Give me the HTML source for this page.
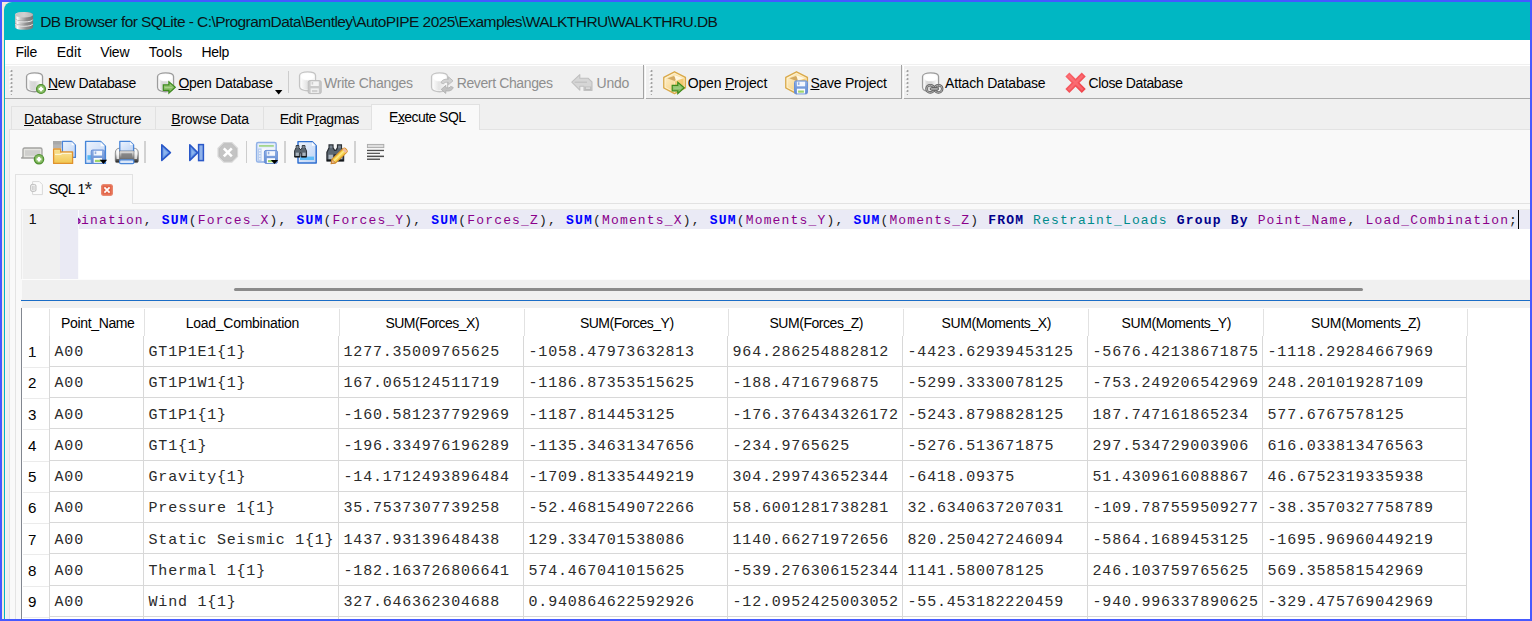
<!DOCTYPE html>
<html><head><meta charset="utf-8"><title>DB Browser for SQLite</title>
<style>
*{margin:0;padding:0;box-sizing:border-box}
html,body{width:1532px;height:621px;overflow:hidden;background:#4659ff}
body{position:relative;font-family:"Liberation Sans",sans-serif;font-size:14px;color:#000}
.a{position:absolute}
.t{position:absolute;white-space:pre;line-height:16px;letter-spacing:-0.36px}
.dis{color:#8e8e8e}
u{text-decoration:underline;text-underline-offset:1px;text-decoration-thickness:1px}
#desk{left:2px;top:2px;width:1528px;height:617px;background:#f6e8dc}
#win{left:4px;top:2px;width:1526px;height:617px;background:#f0f0f0;border-top-left-radius:8px;overflow:hidden}
#win>*{position:absolute}
#title{left:0;top:0;width:1526px;height:38px;background:#00b7c3}
#wborder{left:0;top:30px;width:1px;height:587px;background:#00b7c3}
#menu{left:1px;top:38px;width:1525px;height:24px;background:#fff}
.mono{font-family:"Liberation Mono",monospace}
.hl{background:#a0a0a0}
.wl{background:#fff}
#pane{left:5px;top:127px;width:1530px;height:500px;background:#f9f9f9;border:1px solid #e3e3e3}
.tab{background:#f0f0f0;border:1px solid #e1e1e1;border-bottom:none}
.tabsel{background:#f9f9f9;border:1px solid #e1e1e1;border-bottom:none}
.vsep{width:1px;background:#cfcfcf}
#ed{left:18px;top:208px;width:1510px;height:69px;background:#fff;overflow:hidden}
#ed>*{position:absolute}
.code{font-family:"Liberation Mono",monospace;font-size:13px;letter-spacing:1.179px;line-height:19px;white-space:pre;color:#1c1c1c}
.kw{color:#00008b;font-weight:bold}.fn{color:#0000ff;font-weight:bold}.id{color:#8b008b}.tb{color:#008b8b}
#grid{left:18px;top:306px;width:1510px;height:320px;background:#fff;overflow:hidden}
#grid>*{position:absolute}
.cell{position:absolute;font-family:"Liberation Mono",monospace;font-size:15px;letter-spacing:0.775px;line-height:20px;white-space:pre;color:#2b2b2b}
.hd{position:absolute;white-space:pre;line-height:16px;letter-spacing:-0.36px;text-align:center}
.rn{position:absolute;white-space:pre;line-height:16px;transform:scaleX(1.08);transform-origin:0 0}
</style></head>
<body>

<svg width="0" height="0" style="position:absolute">
<defs>
 <linearGradient id="cylG" x1="0" x2="1" y1="0" y2="0"><stop offset="0" stop-color="#f4f4f4"/><stop offset=".2" stop-color="#dadada"/><stop offset=".55" stop-color="#d6d6d6"/><stop offset=".85" stop-color="#eeeeee"/><stop offset="1" stop-color="#f8f8f8"/></linearGradient>
 <linearGradient id="cylD" x1="0" x2="1" y1="0" y2="0"><stop offset="0" stop-color="#fafafa"/><stop offset=".45" stop-color="#e4e4e4"/><stop offset="1" stop-color="#f6f6f6"/></linearGradient>
 <linearGradient id="grA" x1="0" x2="0" y1="0" y2="1"><stop offset="0" stop-color="#9ccb7c"/><stop offset="1" stop-color="#7db55a"/></linearGradient>
 <linearGradient id="boxG" x1="0" x2="1" y1="0" y2="1"><stop offset="0" stop-color="#fff3d6"/><stop offset="1" stop-color="#f3c766"/></linearGradient>
 <linearGradient id="flpG" x1="0" x2="0" y1="0" y2="1"><stop offset="0" stop-color="#8fb0e6"/><stop offset="1" stop-color="#5f88d0"/></linearGradient>
 <linearGradient id="pgG" x1="0" x2="1" y1="0" y2="1"><stop offset="0" stop-color="#eef4fd"/><stop offset="1" stop-color="#bcd3f5"/></linearGradient>
 <linearGradient id="redG" x1="0" x2="1" y1="0" y2="1"><stop offset="0" stop-color="#fb6a70"/><stop offset="1" stop-color="#ee3f46"/></linearGradient>
 <linearGradient id="folG" x1="0" x2="0" y1="0" y2="1"><stop offset="0" stop-color="#fbe9a6"/><stop offset="1" stop-color="#f1c64f"/></linearGradient>
 <linearGradient id="prG" x1="0" x2="0" y1="0" y2="1"><stop offset="0" stop-color="#f4f4f4"/><stop offset=".5" stop-color="#9a9a9a"/><stop offset="1" stop-color="#e8e8e8"/></linearGradient>
 <linearGradient id="plG" x1="0" x2="1" y1="0" y2="0"><stop offset="0" stop-color="#3d6fd6"/><stop offset="1" stop-color="#8eb0ee"/></linearGradient>
</defs></svg>
<div id="desk" class="a"></div>
<div id="win" class="a">
<div id="title"><span class="t " style="left:36.2px;top:10.6px;font-size:15.5px;letter-spacing:-0.570px;line-height:18px;color:#0b1416;">DB Browser for SQLite - C:\ProgramData\Bentley\AutoPIPE 2025\Examples\WALKTHRU\WALKTHRU.DB</span><svg class="a" style="left:10px;top:9px" width="20" height="20" viewBox="0 0 20 20">
<defs><linearGradient id="dbt" x1="0" x2="1"><stop offset="0" stop-color="#b4b4b4"/><stop offset=".13" stop-color="#fbfbfb"/><stop offset=".3" stop-color="#cacaca"/><stop offset=".62" stop-color="#909090"/><stop offset="1" stop-color="#767676"/></linearGradient>
<linearGradient id="dbt2" x1="0" x2="1"><stop offset="0" stop-color="#c4c4c4"/><stop offset=".5" stop-color="#d0d0d0"/><stop offset="1" stop-color="#b4b4b4"/></linearGradient></defs>
<path d="M1 3.8 C1 .2 19.1 .2 19.1 3.8 L19.1 16 C19.1 19.8 1 19.8 1 16 Z" fill="url(#dbt)"/>
<ellipse cx="10.05" cy="3.8" rx="9.05" ry="2.8" fill="url(#dbt2)"/>
<path d="M1 7.6 C1 10.8 19.1 10.8 19.1 7.6" fill="none" stroke="#8a8a8a" stroke-width=".9" opacity=".55"/>
<path d="M1.5 8.7 C1.5 11.7 18.6 11.7 18.6 8.7" fill="none" stroke="#e8e8e8" stroke-width="1"/>
<path d="M1 11.9 C1 15.1 19.1 15.1 19.1 11.9" fill="none" stroke="#8a8a8a" stroke-width=".9" opacity=".55"/>
<path d="M1.5 13 C1.5 16 18.6 16 18.6 13" fill="none" stroke="#e8e8e8" stroke-width="1"/>
</svg></div>
<div id="wborder"></div>
<div id="menu"><span class="t " style="left:10.6px;top:4px;letter-spacing:-0.320px;">File</span><span class="t " style="left:51.7px;top:4px;letter-spacing:0.092px;">Edit</span><span class="t " style="left:95.2px;top:4px;letter-spacing:-0.264px;">View</span><span class="t " style="left:143.7px;top:4px;letter-spacing:0.229px;">Tools</span><span class="t " style="left:196.6px;top:4px;letter-spacing:-0.364px;">Help</span></div>
<div style="left:1px;top:62px;width:1px;height:560px;background:#fbf2f1"></div><div class="wl" style="left:1px;top:63px;width:1525px;height:1px"></div><div class="hl" style="left:1px;top:96px;width:1525px;height:1px;background:#a9a9a9"></div><div style="left:639px;top:63px;width:1px;height:34px;background:#a3a3a3"></div><div class="wl" style="left:641px;top:63px;width:1px;height:33px"></div><div style="left:640px;top:96px;width:2px;height:1px;background:#f0f0f0"></div><div style="left:897px;top:63px;width:1px;height:34px;background:#a3a3a3"></div><div class="wl" style="left:899px;top:63px;width:1px;height:33px"></div><div style="left:898px;top:96px;width:2px;height:1px;background:#f0f0f0"></div><svg class="a" style="left:5px;top:67.4px" width="4" height="28" viewBox="0 0 4 28" ><rect x="1.5" y="1.0" width="1.9" height="2" fill="#a2a2a2"/><rect x=".3" y="0.1" width="1.5" height="1.5" fill="#ffffff"/><rect x="1.5" y="5.0" width="1.9" height="2" fill="#a2a2a2"/><rect x=".3" y="4.1" width="1.5" height="1.5" fill="#ffffff"/><rect x="1.5" y="9.0" width="1.9" height="2" fill="#a2a2a2"/><rect x=".3" y="8.1" width="1.5" height="1.5" fill="#ffffff"/><rect x="1.5" y="13.0" width="1.9" height="2" fill="#a2a2a2"/><rect x=".3" y="12.1" width="1.5" height="1.5" fill="#ffffff"/><rect x="1.5" y="17.0" width="1.9" height="2" fill="#a2a2a2"/><rect x=".3" y="16.1" width="1.5" height="1.5" fill="#ffffff"/><rect x="1.5" y="21.0" width="1.9" height="2" fill="#a2a2a2"/><rect x=".3" y="20.1" width="1.5" height="1.5" fill="#ffffff"/><rect x="1.8" y="25" width="1.2" height="1" fill="#a8a8a8"/></svg><svg class="a" style="left:644.7px;top:67.4px" width="4" height="28" viewBox="0 0 4 28" ><rect x="1.5" y="1.0" width="1.9" height="2" fill="#a2a2a2"/><rect x=".3" y="0.1" width="1.5" height="1.5" fill="#ffffff"/><rect x="1.5" y="5.0" width="1.9" height="2" fill="#a2a2a2"/><rect x=".3" y="4.1" width="1.5" height="1.5" fill="#ffffff"/><rect x="1.5" y="9.0" width="1.9" height="2" fill="#a2a2a2"/><rect x=".3" y="8.1" width="1.5" height="1.5" fill="#ffffff"/><rect x="1.5" y="13.0" width="1.9" height="2" fill="#a2a2a2"/><rect x=".3" y="12.1" width="1.5" height="1.5" fill="#ffffff"/><rect x="1.5" y="17.0" width="1.9" height="2" fill="#a2a2a2"/><rect x=".3" y="16.1" width="1.5" height="1.5" fill="#ffffff"/><rect x="1.5" y="21.0" width="1.9" height="2" fill="#a2a2a2"/><rect x=".3" y="20.1" width="1.5" height="1.5" fill="#ffffff"/><rect x="1.8" y="25" width="1.2" height="1" fill="#a8a8a8"/></svg><svg class="a" style="left:901.2px;top:67.4px" width="4" height="28" viewBox="0 0 4 28" ><rect x="1.5" y="1.0" width="1.9" height="2" fill="#a2a2a2"/><rect x=".3" y="0.1" width="1.5" height="1.5" fill="#ffffff"/><rect x="1.5" y="5.0" width="1.9" height="2" fill="#a2a2a2"/><rect x=".3" y="4.1" width="1.5" height="1.5" fill="#ffffff"/><rect x="1.5" y="9.0" width="1.9" height="2" fill="#a2a2a2"/><rect x=".3" y="8.1" width="1.5" height="1.5" fill="#ffffff"/><rect x="1.5" y="13.0" width="1.9" height="2" fill="#a2a2a2"/><rect x=".3" y="12.1" width="1.5" height="1.5" fill="#ffffff"/><rect x="1.5" y="17.0" width="1.9" height="2" fill="#a2a2a2"/><rect x=".3" y="16.1" width="1.5" height="1.5" fill="#ffffff"/><rect x="1.5" y="21.0" width="1.9" height="2" fill="#a2a2a2"/><rect x=".3" y="20.1" width="1.5" height="1.5" fill="#ffffff"/><rect x="1.8" y="25" width="1.2" height="1" fill="#a8a8a8"/></svg><svg class="a" style="left:21px;top:70px" width="24" height="24" viewBox="0 0 24 24" ><path d="M1.55 4.6 C1.55 -0.4 17.55 -0.4 17.55 4.6 L17.55 15.6 C17.55 21.1 1.55 21.1 1.55 15.6 Z" fill="#fafafa" stroke="#9c9c9c" stroke-width="1.3"/><path d="M3.3 6.4 C3.3 10.2 15.8 10.2 15.8 6.4 L15.8 15.4 C15.8 19.4 3.3 19.4 3.3 15.4 Z" fill="url(#cylG)"/><ellipse cx="9.55" cy="5.5" rx="6.5" ry="3.2" fill="#ffffff"/><circle cx="16" cy="17" r="4.5" fill="#7fb55c" stroke="#4f9130" stroke-width="1.2"/><circle cx="16" cy="17" r="2.9" fill="#96c776"/><path d="M16 14.7 V19.3 M13.7 17 H18.3" stroke="#fff" stroke-width="2.1"/></svg><svg class="a" style="left:152px;top:70px" width="24" height="24" viewBox="0 0 24 24" ><path d="M1.55 4.6 C1.55 -0.4 17.55 -0.4 17.55 4.6 L17.55 15.6 C17.55 21.1 1.55 21.1 1.55 15.6 Z" fill="#fafafa" stroke="#9c9c9c" stroke-width="1.3"/><path d="M3.3 6.4 C3.3 10.2 15.8 10.2 15.8 6.4 L15.8 15.4 C15.8 19.4 3.3 19.4 3.3 15.4 Z" fill="url(#cylG)"/><ellipse cx="9.55" cy="5.5" rx="6.5" ry="3.2" fill="#ffffff"/><g transform="translate(6.7,8.9)"><path d="M0.6 4 L6.2 4 L6.2 0.8 L12.6 6.4 L6.2 12.2 L6.2 9.4 L0.6 9.4 Z" fill="url(#grA)" stroke="#3c8a1c" stroke-width="1.2" stroke-linejoin="miter"/><path d="M2 6.7 L9.5 6.7" stroke="#b9dba0" stroke-width="1" opacity=".7"/></g></svg><svg class="a" style="left:294.1px;top:69px" width="26" height="26" viewBox="0 0 26 26" ><path d="M1.55 4.6 C1.55 -0.4 17.55 -0.4 17.55 4.6 L17.55 15.6 C17.55 21.1 1.55 21.1 1.55 15.6 Z" fill="#fafafa" stroke="#c4c4c4" stroke-width="1.3"/><path d="M3.3 6.4 C3.3 10.2 15.8 10.2 15.8 6.4 L15.8 15.4 C15.8 19.4 3.3 19.4 3.3 15.4 Z" fill="url(#cylD)"/><ellipse cx="9.55" cy="5.5" rx="6.5" ry="3.2" fill="#ffffff"/><g transform="translate(9.6,9) scale(1.0)"><rect x=".6" y=".6" width="13" height="13" rx="1.6" fill="#c9c9c9" stroke="#bdbdbd" stroke-width="1"/><rect x="3" y="1.4" width="8.2" height="4.6" fill="#f3f3f3"/><rect x="3" y="8.4" width="8.2" height="4.6" fill="#f0f0f0"/><rect x="4.4" y="10" width="5.4" height="2.2" fill="#d0d0d0"/><rect x="4" y="2" width="1.6" height="2.6" fill="#cfcfcf"/></g></svg><svg class="a" style="left:426.1px;top:70px" width="26" height="24" viewBox="0 0 26 24" ><path d="M1.55 4.6 C1.55 -0.4 17.55 -0.4 17.55 4.6 L17.55 15.6 C17.55 21.1 1.55 21.1 1.55 15.6 Z" fill="#fafafa" stroke="#c4c4c4" stroke-width="1.3"/><path d="M3.3 6.4 C3.3 10.2 15.8 10.2 15.8 6.4 L15.8 15.4 C15.8 19.4 3.3 19.4 3.3 15.4 Z" fill="url(#cylD)"/><ellipse cx="9.55" cy="5.5" rx="6.5" ry="3.2" fill="#ffffff"/><path d="M9.6 9.6 C10.4 6.4 14 5.6 17 6.2 L17 3.6 L21.6 7.6 L17 11.6 L17 9.2 C14.6 8.8 12.6 9.2 12.2 10.6 Z" fill="#d2d2d2" stroke="#b8b8b8" stroke-width=".9" transform="translate(1.4,1.2)"/><path d="M22.6 14 C21.8 17.2 18.2 18 15.2 17.4 L15.2 20 L10.6 16 L15.2 12 L15.2 14.4 C17.6 14.8 19.6 14.4 20 13 Z" fill="#c2c2c2" stroke="#b0b0b0" stroke-width=".9" transform="translate(0.6,1.4)"/></svg><svg class="a" style="left:566px;top:71px" width="24" height="20" viewBox="0 0 24 20" ><path d="M1.8 9.2 L9.8 1.6 L9.8 5.2 L18 5.2 L22 9 L22 17.4 L14 17.4 L14 13.2 L9.8 13.2 L9.8 17.2 Z" fill="#d6d6d6" stroke="#c0c0c0" stroke-width="1.1" stroke-linejoin="round"/><path d="M4.6 9.2 L17 9.2" stroke="#c4c4c4" stroke-width="1.4"/><rect x="14.6" y="13.6" width="6.8" height="3.4" fill="#bababa"/><rect x="15.8" y="14.4" width="4.4" height="1.4" fill="#e2e2e2"/></svg><svg class="a" style="left:659px;top:68.6px" width="26" height="26" viewBox="0 0 26 26" ><path d="M11.5 0.8 L22.4 6.4 L22.4 17 L11.5 22.6 L0.8 17 L0.8 6.4 Z" fill="url(#boxG)" stroke="#d9a94a" stroke-width="1.4" stroke-linejoin="round"/><path d="M11.5 10.6 L21.4 7 L21.4 16.5 L11.5 21.5 Z" fill="#f0bc55" opacity=".5"/><path d="M3 7.2 L11.5 4 L20.4 7.2 L11.5 10.6 Z" fill="#f9e3ae"/><path d="M4.4 7.2 L11 5 L13.2 8.4 L11.5 10 Z" fill="#c99b50" opacity=".8"/><path d="M11.5 4.2 L12.8 9.6 L20 7.2 Z" fill="#fff8e6" opacity=".95"/><path d="M11.5 2.3 L21.1 7.2 L21.1 16.2 L11.5 21.1 L2.1 16.2 L2.1 7.2 Z" fill="none" stroke="#fff6dc" stroke-width=".8" opacity=".8"/><path d="M11.5 10.6 L11.5 21.4" stroke="#fbe9bd" stroke-width="1"/><g transform="translate(8.6,10.4)"><path d="M0.6 4 L6.2 4 L6.2 0.8 L12.6 6.4 L6.2 12.2 L6.2 9.4 L0.6 9.4 Z" fill="url(#grA)" stroke="#3c8a1c" stroke-width="1.2" stroke-linejoin="miter"/><path d="M2 6.7 L9.5 6.7" stroke="#b9dba0" stroke-width="1" opacity=".7"/></g></svg><svg class="a" style="left:781px;top:68.6px" width="26" height="26" viewBox="0 0 26 26" ><path d="M11.5 0.8 L22.4 6.4 L22.4 17 L11.5 22.6 L0.8 17 L0.8 6.4 Z" fill="url(#boxG)" stroke="#d9a94a" stroke-width="1.4" stroke-linejoin="round"/><path d="M11.5 10.6 L21.4 7 L21.4 16.5 L11.5 21.5 Z" fill="#f0bc55" opacity=".5"/><path d="M3 7.2 L11.5 4 L20.4 7.2 L11.5 10.6 Z" fill="#f9e3ae"/><path d="M4.4 7.2 L11 5 L13.2 8.4 L11.5 10 Z" fill="#c99b50" opacity=".8"/><path d="M11.5 4.2 L12.8 9.6 L20 7.2 Z" fill="#fff8e6" opacity=".95"/><path d="M11.5 2.3 L21.1 7.2 L21.1 16.2 L11.5 21.1 L2.1 16.2 L2.1 7.2 Z" fill="none" stroke="#fff6dc" stroke-width=".8" opacity=".8"/><path d="M11.5 10.6 L11.5 21.4" stroke="#fbe9bd" stroke-width="1"/><g transform="translate(8.9,9.3) scale(1.0)"><rect x=".6" y=".6" width="13" height="13" rx="1.6" fill="url(#flpG)" stroke="#6a90d6" stroke-width="1"/><rect x="3" y="1.4" width="8.2" height="4.6" fill="#f4f7fd"/><rect x="3" y="8.4" width="8.2" height="4.8" fill="#fbfcfe"/><rect x="4.2" y="10.2" width="5.8" height="2.2" fill="#9fd468"/><rect x="4" y="2" width="1.6" height="2.6" fill="#93aee0"/></g></svg><svg class="a" style="left:916.5px;top:70px" width="26" height="24" viewBox="0 0 26 24" ><path d="M1.55 4.6 C1.55 -0.4 17.55 -0.4 17.55 4.6 L17.55 15.6 C17.55 21.1 1.55 21.1 1.55 15.6 Z" fill="#fafafa" stroke="#9c9c9c" stroke-width="1.3"/><path d="M3.3 6.4 C3.3 10.2 15.8 10.2 15.8 6.4 L15.8 15.4 C15.8 19.4 3.3 19.4 3.3 15.4 Z" fill="url(#cylG)"/><ellipse cx="9.55" cy="5.5" rx="6.5" ry="3.2" fill="#ffffff"/><g fill="none" stroke="#626262" stroke-width="2.5"><rect x="5.5" y="13.2" width="7.6" height="7.3" rx="3.6"/><rect x="13.6" y="13.2" width="7.6" height="7.3" rx="3.6"/></g><g fill="none" stroke="#b8b8b8" stroke-width=".9"><rect x="5.5" y="13.2" width="7.6" height="7.3" rx="3.6"/><rect x="13.6" y="13.2" width="7.6" height="7.3" rx="3.6"/></g><rect x="9.4" y="15.5" width="8" height="2.8" rx="1.2" fill="#a6a6a6" stroke="#5e5e5e" stroke-width=".9"/></svg><svg class="a" style="left:1060px;top:69px" width="24" height="24" viewBox="0 0 24 24" ><g transform="translate(-.05,.1)"><path d="M5.4 1.4 L11.6 7.6 L17.8 1.4 L21.8 5.4 L15.6 11.6 L21.8 17.8 L17.8 21.8 L11.6 15.6 L5.4 21.8 L1.4 17.8 L7.6 11.6 L1.4 5.4 Z" fill="url(#redG)"/><path d="M5.4 3.6 L11.6 9.8 L17.8 3.6 L19.6 5.4 L13.4 11.6 L19.6 17.8 L17.8 19.6 L11.6 13.4 L5.4 19.6 L3.6 17.8 L9.8 11.6 L3.6 5.4 Z" fill="#ff8287" opacity=".5"/></g></svg><span class="t " style="left:43.9px;top:73px;letter-spacing:-0.312px;"><u>N</u>ew Database</span><span class="t " style="left:174.5px;top:73px;letter-spacing:-0.297px;"><u>O</u>pen Database</span><span class="t dis" style="left:320.1px;top:73px;letter-spacing:-0.278px;">Write Changes</span><span class="t dis" style="left:452.7px;top:73px;letter-spacing:-0.374px;">Revert Changes</span><span class="t dis" style="left:592.6px;top:73px;letter-spacing:-0.290px;">Undo</span><span class="t " style="left:683.8px;top:73px;letter-spacing:-0.201px;">Open <u>P</u>roject</span><span class="t " style="left:806.4px;top:73px;letter-spacing:-0.261px;"><u>S</u>ave Project</span><span class="t " style="left:941.1px;top:73px;letter-spacing:-0.215px;">Attach Database</span><span class="t " style="left:1084.6px;top:73px;letter-spacing:-0.401px;">Close Database</span><svg class="a" style="left:271px;top:88px" width="8" height="5" viewBox="0 0 8 5" ><path d="M0 0 L7.4 0 L3.7 4.4 Z" fill="#000"/></svg><div class="vsep" style="left:284px;top:69px;height:22px;background:#cdcdcd"></div><div id="pane"></div><div class="tab" style="left:7px;top:104px;width:145px;height:23px"></div><div class="tab" style="left:151px;top:104px;width:109px;height:23px"></div><div class="tab" style="left:259px;top:104px;width:109px;height:23px"></div><div class="tabsel" style="left:367px;top:102px;width:109px;height:26px"></div><span class="t " style="left:20.1px;top:109px;letter-spacing:-0.184px;"><u>D</u>atabase Structure</span><span class="t " style="left:167.3px;top:109px;letter-spacing:-0.244px;"><u>B</u>rowse Data</span><span class="t " style="left:275.7px;top:109px;letter-spacing:-0.403px;">Edit P<u>r</u>agmas</span><span class="t " style="left:385.1px;top:107px;letter-spacing:-0.559px;">E<u>x</u>ecute SQL</span><svg class="a" style="left:16px;top:142.6px" width="26" height="22" viewBox="0 0 26 22" ><path d="M1.6 13 L3 11.8 L3 4.6 Q3 3 4.6 3 L20.4 3 Q22 3 22 4.6 L22 11.8 L23 13 Z" fill="#e4e4e0" stroke="#a2a2a0" stroke-width="1.3" stroke-linejoin="round"/><rect x="5" y="5.2" width="15" height="5.6" fill="#cfcfcd"/><circle cx="19" cy="14.2" r="4.7" fill="#7fb55c" stroke="#4f9130" stroke-width="1.2"/><circle cx="19" cy="14.2" r="3.0" fill="#96c776"/><path d="M19 11.899999999999999 V16.5 M16.7 14.2 H21.3" stroke="#fff" stroke-width="2.1"/></svg><svg class="a" style="left:48px;top:138px" width="26" height="26" viewBox="0 0 26 26" ><rect x="1" y="1" width="8.4" height="7.4" fill="#b4b4b4"/><rect x="1" y="1" width="8.4" height="3.4" fill="#a8a8a8"/><g transform="translate(9.6,0.6)"><path d="M.8 .8 L10.0 .8 L13.799999999999999 4.6 L13.799999999999999 16.8 L.8 16.8 Z" fill="url(#pgG)" stroke="#4a84d8" stroke-width="1.3" stroke-linejoin="round"/><path d="M10.0 1 L10.0 4.6 L13.6 4.6 Z" fill="#fff" opacity=".9"/></g><path d="M1.6 9 L8.6 9 L8.6 12 L20.6 12 L20.6 23.4 L1.6 23.4 Z" fill="url(#folG)" stroke="#e0922e" stroke-width="1.3" stroke-linejoin="round"/><path d="M3 14.4 L8.8 14.4 L9.8 13.4 L19.4 13.4" fill="none" stroke="#fdf4cf" stroke-width="1.2"/><rect x="3" y="10.4" width="5" height="3" fill="#f6dc86"/></svg><svg class="a" style="left:80px;top:138px" width="26" height="26" viewBox="0 0 26 26" ><g transform="translate(0.8,0.6)"><path d="M.8 .8 L15.799999999999999 .8 L20.599999999999998 5.6 L20.599999999999998 22.8 L.8 22.8 Z" fill="url(#pgG)" stroke="#4686d8" stroke-width="1.4" stroke-linejoin="round"/><path d="M15.799999999999999 1 L15.799999999999999 5.6 L20.4 5.6 Z" fill="#fff" opacity=".9"/></g><rect x="3.4" y="15.2" width="4" height="4.6" fill="#57b8f6"/><g transform="translate(6.6,9.4) scale(1.02)"><rect x=".6" y=".6" width="13" height="13" rx="1.6" fill="url(#flpG)" stroke="#6a90d6" stroke-width="1"/><rect x="3" y="1.4" width="8.2" height="4.6" fill="#f4f7fd"/><rect x="3" y="8.4" width="8.2" height="4.8" fill="#fbfcfe"/><rect x="4.2" y="10.2" width="5.8" height="2.2" fill="#9fd468"/><rect x="4" y="2" width="1.6" height="2.6" fill="#93aee0"/></g><path d="M15.6 19.8 L23.2 19.8 L19.4 24 Z" fill="#000"/></svg><svg class="a" style="left:110px;top:138px" width="26" height="26" viewBox="0 0 26 26" ><defs><linearGradient id="prW" x1="0" x2="0" y1="0" y2="1"><stop offset="0" stop-color="#ffffff"/><stop offset=".4" stop-color="#d9d9d9"/><stop offset=".75" stop-color="#6a6a6a"/><stop offset="1" stop-color="#1e1e1e"/></linearGradient><linearGradient id="prM" x1="0" x2="0" y1="0" y2="1"><stop offset="0" stop-color="#ececec"/><stop offset=".35" stop-color="#b9b9b9"/><stop offset="1" stop-color="#5a5a5a"/></linearGradient></defs><path d="M1.3 13 Q1.3 8.2 6 8.2 L19.6 8.2 Q24.3 8.2 24.3 13 L24.3 21 Q24.3 22.6 22.7 22.6 L2.9 22.6 Q1.3 22.6 1.3 21 Z" fill="url(#prW)" stroke="#6b6b6b" stroke-width=".7"/><path d="M2.6 13 Q2.6 9.6 5.4 9.4 L5.4 19 L2.6 19 Z" fill="#ffffff" opacity=".75"/><path d="M20.2 9.4 Q23 9.6 23 13 L23 19 L20.2 19 Z" fill="#ffffff" opacity=".7"/><g transform="translate(5,0.6)"><path d="M.8 .8 L11.0 .8 L14.6 4.4 L14.6 10.799999999999999 L.8 10.799999999999999 Z" fill="url(#pgG)" stroke="#4a86d8" stroke-width="1.3" stroke-linejoin="round"/><path d="M11.0 1 L11.0 4.4 L14.4 4.4 Z" fill="#fff" opacity=".9"/></g><rect x="5.4" y="11" width="14.6" height="9" fill="url(#prM)" stroke="#7a7a7a" stroke-width=".6"/><rect x="7.4" y="13.4" width="10.6" height="4.8" fill="#7e7e7e" opacity=".85"/><rect x="5.6" y="19.8" width="14.2" height="3.8" rx="1.2" fill="#dbe7f8" stroke="#4a86d8" stroke-width="1.2"/></svg><svg class="a" style="left:156px;top:140px" width="14" height="22" viewBox="0 0 14 22" ><path d="M1.8 2.8 L10.4 10.6 L1.8 18.4 Z" fill="#6e9de6" stroke="#2a58c8" stroke-width="1.6" stroke-linejoin="round"/><path d="M3.6 7 L7.6 10.6 L3.6 14.2 Z" fill="#8db4ee"/></svg><svg class="a" style="left:184px;top:140px" width="18" height="22" viewBox="0 0 18 22" ><path d="M1.8 2.8 L9.6 10.6 L1.8 18.4 Z" fill="#6e9de6" stroke="#2a58c8" stroke-width="1.6" stroke-linejoin="round"/><path d="M3.6 7.4 L6.8 10.6 L3.6 13.8 Z" fill="#8db4ee"/><rect x="10.6" y="2.6" width="4.8" height="16" fill="#8fb2ea" stroke="#2a58c8" stroke-width="1.5"/></svg><svg class="a" style="left:212px;top:139px" width="24" height="24" viewBox="0 0 24 24" ><path d="M7.8 1.8 L15.8 1.8 L21.4 7.4 L21.4 15.4 L15.8 21 L7.8 21 L2.2 15.4 L2.2 7.4 Z" fill="#c4c4c4" stroke="#d8d8d8" stroke-width="1.5"/><path d="M8 2.8 L15.6 2.8 L20.4 7.6 L20.4 15.2 L15.6 20 L8 20 L3.2 15.2 L3.2 7.6 Z" fill="none" stroke="#bcbcbc" stroke-width=".8"/><path d="M7.8 7.4 L15.8 15.4 M15.8 7.4 L7.8 15.4" stroke="#fff" stroke-width="2.6"/></svg><svg class="a" style="left:251px;top:139px" width="26" height="26" viewBox="0 0 26 26" ><rect x="1.6" y="1.6" width="19.6" height="19.4" rx="1.6" fill="#e6eefb" stroke="#8fb0e6" stroke-width="1.5"/><rect x="4" y="4" width="14.8" height="1.8" fill="#a5d68c"/><rect x="3" y="7.4" width="16.8" height="12.6" fill="#f7f9fd"/><rect x="3" y="7.4" width="3.6" height="12.6" fill="#b9cef0"/><rect x="4.2" y="8.8" width="1.3" height="1.3" fill="#fff"/><rect x="4.2" y="11.6" width="1.3" height="1.3" fill="#fff"/><rect x="4.2" y="14.4" width="1.3" height="1.3" fill="#fff"/><rect x="4.2" y="17.2" width="1.3" height="1.3" fill="#fff"/><g transform="translate(8.8,8.8) scale(1.0)"><rect x=".6" y=".6" width="13" height="13" rx="1.6" fill="url(#flpG)" stroke="#6a90d6" stroke-width="1"/><rect x="3" y="1.4" width="8.2" height="4.6" fill="#f4f7fd"/><rect x="3" y="8.4" width="8.2" height="4.8" fill="#fbfcfe"/><rect x="4.2" y="10.2" width="5.8" height="2.2" fill="#9fd468"/><rect x="4" y="2" width="1.6" height="2.6" fill="#93aee0"/></g><path d="M15.8 19 L23.2 19 L19.5 23 Z" fill="#000"/></svg><svg class="a" style="left:289px;top:138px" width="26" height="26" viewBox="0 0 26 26" ><g transform="translate(4.2,0.8)"><path d="M.8 .8 L14.8 .8 L19.0 5 L19.0 22.2 L.8 22.2 Z" fill="url(#pgG)" stroke="#2f6fd0" stroke-width="1.45" stroke-linejoin="round"/><path d="M14.8 1 L14.8 5 L18.8 5 Z" fill="#fff" opacity=".9"/></g><rect x="7" y="16.6" width="14" height="3.4" fill="#5ebcf8"/><g transform="translate(0.6,4.6) scale(0.98)"><path d="M1 6.4 L2.6 3 L2.6 1 L5.4 1 L5.4 3 L6.6 5 L7.6 5 L8.8 3 L8.8 1 L11.6 1 L11.6 3 L13.2 6.4 L13.2 12.6 L7.8 12.6 L7.8 8.4 L6.4 8.4 L6.4 12.6 L1 12.6 Z" fill="#5b6670" stroke="#2b3036" stroke-width="1"/><rect x="2.2" y="8.2" width="3.2" height="3.6" fill="#aab4be"/><rect x="9" y="8.2" width="3.2" height="3.6" fill="#aab4be"/><rect x="1" y="11.6" width="5.4" height="1.4" fill="#15181b"/><rect x="7.8" y="11.6" width="5.4" height="1.4" fill="#15181b"/><rect x="3" y="1.4" width="2" height="2" fill="#7b8691"/><rect x="9.2" y="1.4" width="2" height="2" fill="#7b8691"/></g></svg><svg class="a" style="left:321px;top:140px" width="24" height="24" viewBox="0 0 24 24" ><g transform="translate(0.6,1.6) scale(1.36)"><path d="M1 6.4 L2.6 3 L2.6 1 L5.4 1 L5.4 3 L6.6 5 L7.6 5 L8.8 3 L8.8 1 L11.6 1 L11.6 3 L13.2 6.4 L13.2 12.6 L7.8 12.6 L7.8 8.4 L6.4 8.4 L6.4 12.6 L1 12.6 Z" fill="#5b6670" stroke="#2b3036" stroke-width="1"/><rect x="2.2" y="8.2" width="3.2" height="3.6" fill="#aab4be"/><rect x="9" y="8.2" width="3.2" height="3.6" fill="#aab4be"/><rect x="1" y="11.6" width="5.4" height="1.4" fill="#15181b"/><rect x="7.8" y="11.6" width="5.4" height="1.4" fill="#15181b"/><rect x="3" y="1.4" width="2" height="2" fill="#7b8691"/><rect x="9.2" y="1.4" width="2" height="2" fill="#7b8691"/></g><g transform="translate(6.2,21.6) rotate(-44)"><path d="M0 0 L3.6 -2.6 L19 -2.6 Q20.8 -2.6 20.8 -.8 L20.8 .8 Q20.8 2.6 19 2.6 L3.6 2.6 Z" fill="#f6d24c" stroke="#d9902a" stroke-width="1"/><path d="M0 0 L3.6 -2.6 L3.6 2.6 Z" fill="#e8b88a" stroke="#c27a2a" stroke-width=".8"/><rect x="4" y="-.9" width="14" height="1.4" fill="#fbe88e"/><rect x="17.6" y="-2.4" width="2.6" height="4.8" rx="1" fill="#f0b9a0"/></g></svg><svg class="a" style="left:362px;top:141px" width="20" height="18" viewBox="0 0 20 18" ><rect x="1.4" y="1.4" width="16.4" height="3.2" fill="#dedede" stroke="#a9a9a9" stroke-width=".9"/><rect x="1" y="6.8" width="17" height="1.3" fill="#4e4e4e"/><rect x="1" y="9.7" width="13" height="1.3" fill="#5a5a5a"/><rect x="1" y="12.6" width="17" height="1.5" fill="#4e4e4e"/><rect x="1" y="15.5" width="13" height="1.5" fill="#5a5a5a"/></svg><div style="left:140px;top:139px;width:2px;height:22px;background:#d2d2d2"></div><div style="left:280px;top:139px;width:2px;height:22px;background:#d2d2d2"></div><div style="left:350px;top:139px;width:2px;height:22px;background:#d2d2d2"></div><div style="left:242px;top:139px;width:1px;height:22px;background:#cdcdcd"></div><div style="left:11px;top:172px;width:118px;height:30px;background:#f9f9f9;border:1px solid #e2e2e2;border-bottom:none"></div><div style="left:128px;top:201px;width:1400px;height:1px;background:#e2e2e2"></div><div style="left:11px;top:201px;width:1px;height:420px;background:#e4e4e4"></div><svg class="a" style="left:26px;top:179px" width="14" height="15" viewBox="0 0 14 15" ><path d="M2.6 .6 L9.4 .6 L12.4 3.6 L12.4 13.6 L2.6 13.6 Z" fill="#fbfbfb" stroke="#d8d8d8" stroke-width="1"/><rect x=".6" y="3.4" width="5.4" height="7" rx="1.6" fill="#ededed" stroke="#b8b8b8" stroke-width=".9"/><path d="M2.6 5 V9 M4 5 V9" stroke="#c2c2c2" stroke-width=".7"/></svg><span class="t " style="left:44.7px;top:179px;letter-spacing:-0.618px;">SQL 1</span><span class="t" style="left:80.4px;top:176.3px;font-size:20px;line-height:22px;letter-spacing:0;color:#303030">*</span><svg class="a" style="left:97px;top:182px" width="12" height="12" viewBox="0 0 12 12" ><rect x=".2" y=".2" width="11.6" height="11.6" rx="2" fill="#e2664a"/><rect x="1" y="1" width="10" height="10" rx="1.4" fill="none" stroke="#ec8a70" stroke-width=".8"/><path d="M3.4 3.4 L8.6 8.6 M8.6 3.4 L3.4 8.6" stroke="#fff" stroke-width="1.7"/></svg><div style="left:17px;top:207px;width:1512px;height:1px;background:#ebebeb"></div><div style="left:17px;top:207px;width:1px;height:70px;background:#ebebeb"></div><div id="ed"><div style="left:0;top:0;width:1px;height:69px;background:#f8f8f8"></div><div style="left:1px;top:0;width:37px;height:69px;background:#f0f0f0"></div><div style="left:38px;top:0;width:18px;height:69px;background:#eaeaf4"></div><div style="left:56px;top:0;width:1px;height:69px;background:#fbfbfd"></div><div style="left:57px;top:0;width:1460px;height:19px;background:#eaeaf5"></div><span class="t" style="left:6.7px;top:1px;font-size:14px;line-height:16px;letter-spacing:0">1</span><div style="left:7.7px;top:13px;width:5.6px;height:1px;background:#1a1a1a"></div><svg class="a" style="left:56px;top:8px" width="4" height="7" viewBox="0 0 4 7"><path d="M-2 .8 C3.4 .2 3.4 6.2 -2 5.6" fill="none" stroke="#8b008b" stroke-width="1.3"/></svg><div style="left:56px;top:0;width:1440.1px;height:19px;overflow:hidden"><div class="code" style="position:absolute;right:0;top:1px"><span class="kw">SELECT</span> <span class="id">Point_Name</span>, <span class="id">Load_Combination</span>, <span class="fn">SUM</span>(<span class="id">Forces_X</span>), <span class="fn">SUM</span>(<span class="id">Forces_Y</span>), <span class="fn">SUM</span>(<span class="id">Forces_Z</span>), <span class="fn">SUM</span>(<span class="id">Moments_X</span>), <span class="fn">SUM</span>(<span class="id">Moments_Y</span>), <span class="fn">SUM</span>(<span class="id">Moments_Z</span>) <span class="kw">FROM</span> <span class="tb">Restraint_Loads</span> <span class="kw">Group</span> <span class="kw">By</span> <span class="id">Point_Name</span>, <span class="id">Load_Combination</span>;</div></div><div style="left:1496.2px;top:0;width:1.2px;height:19px;background:#000"></div></div><div style="left:18px;top:277px;width:1512px;height:1px;background:#fcfcfc"></div><div style="left:18px;top:278px;width:1512px;height:28px;background:#f0f0f0"></div><div style="left:230px;top:286px;width:1129px;height:3px;border-radius:2px;background:#8b8b8b"></div><div style="left:17px;top:297px;width:1512px;height:3px;background:#f3f0ee"></div><div style="left:17px;top:298px;width:1512px;height:1px;background:#1b6dc6"></div><div id="grid"><div style="left:27px;top:1px;width:1px;height:27px;background:#e2e2e2"></div><div style="left:122px;top:1px;width:1px;height:27px;background:#e2e2e2"></div><div style="left:317px;top:1px;width:1px;height:27px;background:#e2e2e2"></div><div style="left:502px;top:1px;width:1px;height:27px;background:#e2e2e2"></div><div style="left:706px;top:1px;width:1px;height:27px;background:#e2e2e2"></div><div style="left:881px;top:1px;width:1px;height:27px;background:#e2e2e2"></div><div style="left:1066px;top:1px;width:1px;height:27px;background:#e2e2e2"></div><div style="left:1241px;top:1px;width:1px;height:27px;background:#e2e2e2"></div><div style="left:1445px;top:1px;width:1px;height:27px;background:#e2e2e2"></div><div style="left:27px;top:28px;width:1px;height:300px;background:#d8d8d8"></div><div style="left:121px;top:28px;width:1px;height:300px;background:#d8d8d8"></div><div style="left:316px;top:28px;width:1px;height:300px;background:#d8d8d8"></div><div style="left:501px;top:28px;width:1px;height:300px;background:#d8d8d8"></div><div style="left:705px;top:28px;width:1px;height:300px;background:#d8d8d8"></div><div style="left:880px;top:28px;width:1px;height:300px;background:#d8d8d8"></div><div style="left:1065px;top:28px;width:1px;height:300px;background:#d8d8d8"></div><div style="left:1240px;top:28px;width:1px;height:300px;background:#d8d8d8"></div><div style="left:1444px;top:28px;width:1px;height:300px;background:#d8d8d8"></div><div style="left:28px;top:58px;width:1417px;height:1px;background:#d8d8d8"></div><div style="left:1px;top:59px;width:26px;height:1px;background:#ebebeb"></div><div style="left:28px;top:89px;width:1417px;height:1px;background:#d8d8d8"></div><div style="left:1px;top:90px;width:26px;height:1px;background:#ebebeb"></div><div style="left:28px;top:120px;width:1417px;height:1px;background:#d8d8d8"></div><div style="left:1px;top:121px;width:26px;height:1px;background:#ebebeb"></div><div style="left:28px;top:152px;width:1417px;height:1px;background:#d8d8d8"></div><div style="left:1px;top:153px;width:26px;height:1px;background:#ebebeb"></div><div style="left:28px;top:183px;width:1417px;height:1px;background:#d8d8d8"></div><div style="left:1px;top:184px;width:26px;height:1px;background:#ebebeb"></div><div style="left:28px;top:214px;width:1417px;height:1px;background:#d8d8d8"></div><div style="left:1px;top:215px;width:26px;height:1px;background:#ebebeb"></div><div style="left:28px;top:245px;width:1417px;height:1px;background:#d8d8d8"></div><div style="left:1px;top:246px;width:26px;height:1px;background:#ebebeb"></div><div style="left:28px;top:277px;width:1417px;height:1px;background:#d8d8d8"></div><div style="left:1px;top:278px;width:26px;height:1px;background:#ebebeb"></div><div style="left:28px;top:308px;width:1417px;height:1px;background:#d8d8d8"></div><div style="left:1px;top:309px;width:26px;height:1px;background:#ebebeb"></div><div style="left:28px;top:339px;width:1417px;height:1px;background:#d8d8d8"></div><div style="left:1px;top:340px;width:26px;height:1px;background:#ebebeb"></div><span class="hd" style="left:29px;top:7px;width:94px;letter-spacing:-0.360px;text-indent:-0.360px">Point_Name</span><span class="hd" style="left:123px;top:7px;width:195px;letter-spacing:-0.255px;text-indent:-0.255px">Load_Combination</span><span class="hd" style="left:318px;top:7px;width:185px;letter-spacing:-0.520px;text-indent:-0.520px">SUM(Forces_X)</span><span class="hd" style="left:503px;top:7px;width:204px;letter-spacing:-0.520px;text-indent:-0.520px">SUM(Forces_Y)</span><span class="hd" style="left:707px;top:7px;width:175px;letter-spacing:-0.455px;text-indent:-0.455px">SUM(Forces_Z)</span><span class="hd" style="left:882px;top:7px;width:185px;letter-spacing:-0.402px;text-indent:-0.402px">SUM(Moments_X)</span><span class="hd" style="left:1067px;top:7px;width:175px;letter-spacing:-0.402px;text-indent:-0.402px">SUM(Moments_Y)</span><span class="hd" style="left:1242px;top:7px;width:204px;letter-spacing:-0.342px;text-indent:-0.342px">SUM(Moments_Z)</span><span class="rn" style="left:6px;top:36px">1</span><div style="left:6.600000000000001px;top:48px;width:5.6px;height:1px;background:#222"></div><span class="cell" style="left:32.6px;top:35px">A00</span><span class="cell" style="left:126.6px;top:35px">GT1P1E1{1}</span><span class="cell" style="left:321.6px;top:35px">1277.35009765625</span><span class="cell" style="left:506.6px;top:35px">-1058.47973632813</span><span class="cell" style="left:710.6px;top:35px">964.286254882812</span><span class="cell" style="left:885.6px;top:35px">-4423.62939453125</span><span class="cell" style="left:1070.6px;top:35px">-5676.42138671875</span><span class="cell" style="left:1245.6px;top:35px">-1118.29284667969</span><span class="rn" style="left:6px;top:67px">2</span><span class="cell" style="left:32.6px;top:66px">A00</span><span class="cell" style="left:126.6px;top:66px">GT1P1W1{1}</span><span class="cell" style="left:321.6px;top:66px">167.065124511719</span><span class="cell" style="left:506.6px;top:66px">-1186.87353515625</span><span class="cell" style="left:710.6px;top:66px">-188.4716796875</span><span class="cell" style="left:885.6px;top:66px">-5299.3330078125</span><span class="cell" style="left:1070.6px;top:66px">-753.249206542969</span><span class="cell" style="left:1245.6px;top:66px">248.201019287109</span><span class="rn" style="left:6px;top:99px">3</span><span class="cell" style="left:32.6px;top:98px">A00</span><span class="cell" style="left:126.6px;top:98px">GT1P1{1}</span><span class="cell" style="left:321.6px;top:98px">-160.581237792969</span><span class="cell" style="left:506.6px;top:98px">-1187.814453125</span><span class="cell" style="left:710.6px;top:98px">-176.376434326172</span><span class="cell" style="left:885.6px;top:98px">-5243.8798828125</span><span class="cell" style="left:1070.6px;top:98px">187.747161865234</span><span class="cell" style="left:1245.6px;top:98px">577.6767578125</span><span class="rn" style="left:6px;top:130px">4</span><span class="cell" style="left:32.6px;top:129px">A00</span><span class="cell" style="left:126.6px;top:129px">GT1{1}</span><span class="cell" style="left:321.6px;top:129px">-196.334976196289</span><span class="cell" style="left:506.6px;top:129px">-1135.34631347656</span><span class="cell" style="left:710.6px;top:129px">-234.9765625</span><span class="cell" style="left:885.6px;top:129px">-5276.513671875</span><span class="cell" style="left:1070.6px;top:129px">297.534729003906</span><span class="cell" style="left:1245.6px;top:129px">616.033813476563</span><span class="rn" style="left:6px;top:161px">5</span><span class="cell" style="left:32.6px;top:160px">A00</span><span class="cell" style="left:126.6px;top:160px">Gravity{1}</span><span class="cell" style="left:321.6px;top:160px">-14.1712493896484</span><span class="cell" style="left:506.6px;top:160px">-1709.81335449219</span><span class="cell" style="left:710.6px;top:160px">304.299743652344</span><span class="cell" style="left:885.6px;top:160px">-6418.09375</span><span class="cell" style="left:1070.6px;top:160px">51.4309616088867</span><span class="cell" style="left:1245.6px;top:160px">46.6752319335938</span><span class="rn" style="left:6px;top:192px">6</span><span class="cell" style="left:32.6px;top:191px">A00</span><span class="cell" style="left:126.6px;top:191px">Pressure 1{1}</span><span class="cell" style="left:321.6px;top:191px">35.7537307739258</span><span class="cell" style="left:506.6px;top:191px">-52.4681549072266</span><span class="cell" style="left:710.6px;top:191px">58.6001281738281</span><span class="cell" style="left:885.6px;top:191px">32.6340637207031</span><span class="cell" style="left:1070.6px;top:191px">-109.787559509277</span><span class="cell" style="left:1245.6px;top:191px">-38.3570327758789</span><span class="rn" style="left:6px;top:224px">7</span><span class="cell" style="left:32.6px;top:223px">A00</span><span class="cell" style="left:126.6px;top:223px">Static Seismic 1{1}</span><span class="cell" style="left:321.6px;top:223px">1437.93139648438</span><span class="cell" style="left:506.6px;top:223px">129.334701538086</span><span class="cell" style="left:710.6px;top:223px">1140.66271972656</span><span class="cell" style="left:885.6px;top:223px">820.250427246094</span><span class="cell" style="left:1070.6px;top:223px">-5864.1689453125</span><span class="cell" style="left:1245.6px;top:223px">-1695.96960449219</span><span class="rn" style="left:6px;top:255px">8</span><span class="cell" style="left:32.6px;top:254px">A00</span><span class="cell" style="left:126.6px;top:254px">Thermal 1{1}</span><span class="cell" style="left:321.6px;top:254px">-182.163726806641</span><span class="cell" style="left:506.6px;top:254px">574.467041015625</span><span class="cell" style="left:710.6px;top:254px">-539.276306152344</span><span class="cell" style="left:885.6px;top:254px">1141.580078125</span><span class="cell" style="left:1070.6px;top:254px">246.103759765625</span><span class="cell" style="left:1245.6px;top:254px">569.358581542969</span><span class="rn" style="left:6px;top:286px">9</span><span class="cell" style="left:32.6px;top:285px">A00</span><span class="cell" style="left:126.6px;top:285px">Wind 1{1}</span><span class="cell" style="left:321.6px;top:285px">327.646362304688</span><span class="cell" style="left:506.6px;top:285px">0.940864622592926</span><span class="cell" style="left:710.6px;top:285px">-12.0952425003052</span><span class="cell" style="left:885.6px;top:285px">-55.453182220459</span><span class="cell" style="left:1070.6px;top:285px">-940.996337890625</span><span class="cell" style="left:1245.6px;top:285px">-329.475769042969</span></div><div style="left:17px;top:305px;width:1px;height:320px;background:#828790"></div><div style="left:17px;top:305px;width:1512px;height:1px;background:#f0f0f0"></div></div>
</body></html>
